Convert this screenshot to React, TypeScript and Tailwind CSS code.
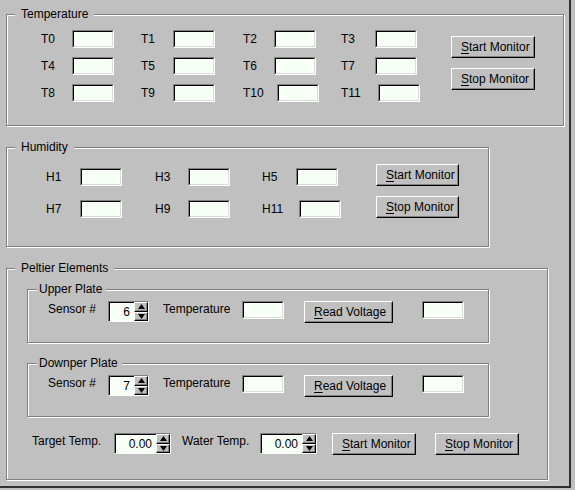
import React from 'react';

// Motif-style sunken text field
const Field = () => (
  <div className="w-[42px] h-[18px] shrink-0 border border-t-[#808080] border-l-[#808080] border-b-white border-r-white">
    <div className="h-full border border-t-black border-l-black border-b-[#dcdcdc] border-r-[#dcdcdc] bg-[#f7fff7]" />
  </div>
);

const Button: React.FC<{ u: string; rest: string; w: string }> = ({ u, rest, w }) => (
  <button
    className={`${w} h-[22px] shrink-0 flex items-center pl-[9px] bg-[#c0c0c0] border border-t-white border-l-white border-b-black border-r-black shadow-[inset_-1px_-1px_0_#808080] text-[12px] leading-[14px] whitespace-pre`}
  >
    <span className="underline underline-offset-[2px]">{u}</span>
    {rest}
  </button>
);

const Arrow: React.FC<{ up?: boolean }> = ({ up }) => (
  <div className="flex-1 flex items-center justify-center border border-t-white border-l-white border-b-black border-r-black shadow-[inset_-1px_-1px_0_#808080]">
    <svg width="7" height="5" viewBox="0 0 7 5">
      {up ? <polygon points="3.5,0 7,5 0,5" fill="#000" /> : <polygon points="0,0 7,0 3.5,5" fill="#000" />}
    </svg>
  </div>
);

const Spin: React.FC<{ value: string; w: string }> = ({ value, w }) => (
  <div className={`${w} h-[21px] shrink-0 flex border border-t-[#808080] border-l-[#808080] border-b-white border-r-white`}>
    <div className="flex-1 flex items-center justify-end pr-[4px] bg-[#f7fff7] border-t border-l border-black">
      {value}
    </div>
    <div className="w-[14px] flex flex-col bg-[#c0c0c0]">
      <Arrow up />
      <Arrow />
    </div>
  </div>
);

const Labeled: React.FC<{ label: string; lw: string; w?: string }> = ({ label, lw, w = '' }) => (
  <div className={`flex items-center ${w}`}>
    <span className={`${lw} shrink-0`}>{label}</span>
    <Field />
  </div>
);

const Group: React.FC<{ title: string; box: string; sub?: boolean; children: React.ReactNode }> = ({ title, box, sub, children }) => (
  <div className={`relative shrink-0 border border-[#808080] shadow-[inset_1px_1px_0_#fff,1px_1px_0_#fff] ${box}`}>
    <span
      className={`absolute top-[-8px] bg-[#c0c0c0] leading-[14px] whitespace-nowrap ${sub ? 'left-[9px] pl-[2px] pr-[4px]' : 'left-[8px] px-[6px]'}`}
    >
      {title}
    </span>
    {children}
  </div>
);

const PlateRow: React.FC<{ value: string }> = ({ value }) => (
  <div className="flex items-start pt-[11px] pl-[20px]">
    <span className="w-[60px] mt-[1px] shrink-0">Sensor #</span>
    <Spin value={value} w="w-[41px]" />
    <span className="ml-[14px] w-[79px] mt-[1px] shrink-0">Temperature</span>
    <Field />
    <div className="ml-[20px]">
      <Button u="R" rest="ead Voltage" w="w-[89px]" />
    </div>
    <div className="ml-[29px]">
      <Field />
    </div>
  </div>
);

export default function App() {
  return (
    <div className="w-[575px] h-[490px] bg-[#c0c0c0] text-black text-[12px] leading-[14px] font-['Liberation_Sans',Arial,sans-serif]">
      <div className="w-[571px] h-[488px] border-r-2 border-b-2 border-[#303030] pl-[6px] pt-[14px] flex flex-col">
        <Group title="Temperature" box="w-[558px] h-[112px]">
          <div className="flex items-start pt-[15px] pl-[34px]">
            <div className="w-[410px] flex flex-col gap-[9px]">
              <div className="flex">
                <Labeled label="T0" lw="w-[31px]" w="w-[100px]" />
                <Labeled label="T1" lw="w-[32px]" w="w-[102px]" />
                <Labeled label="T2" lw="w-[31px]" w="w-[98px]" />
                <Labeled label="T3" lw="w-[34px]" />
              </div>
              <div className="flex">
                <Labeled label="T4" lw="w-[31px]" w="w-[100px]" />
                <Labeled label="T5" lw="w-[32px]" w="w-[102px]" />
                <Labeled label="T6" lw="w-[31px]" w="w-[98px]" />
                <Labeled label="T7" lw="w-[34px]" />
              </div>
              <div className="flex">
                <Labeled label="T8" lw="w-[31px]" w="w-[100px]" />
                <Labeled label="T9" lw="w-[32px]" w="w-[102px]" />
                <Labeled label="T10" lw="w-[34px]" w="w-[98px]" />
                <Labeled label="T11" lw="w-[37px]" />
              </div>
            </div>
            <div className="mt-[6px] flex flex-col gap-[10px]">
              <Button u="S" rest="tart Monitor" w="w-[84px]" />
              <Button u="S" rest="top Monitor" w="w-[84px]" />
            </div>
          </div>
        </Group>

        <div className="mt-[21px]">
          <Group title="Humidity" box="w-[483px] h-[100px]">
            <div className="flex items-start pt-[16px] pl-[39px]">
              <div className="w-[330px] mt-[4px] flex flex-col gap-[14px]">
                <div className="flex">
                  <Labeled label="H1" lw="w-[34px]" w="w-[109px]" />
                  <Labeled label="H3" lw="w-[33px]" w="w-[107px]" />
                  <Labeled label="H5" lw="w-[34px]" />
                </div>
                <div className="flex">
                  <Labeled label="H7" lw="w-[34px]" w="w-[109px]" />
                  <Labeled label="H9" lw="w-[33px]" w="w-[107px]" />
                  <Labeled label="H11" lw="w-[37px]" />
                </div>
              </div>
              <div className="flex flex-col gap-[10px]">
                <Button u="S" rest="tart Monitor" w="w-[83px]" />
                <Button u="S" rest="top Monitor" w="w-[83px]" />
              </div>
            </div>
          </Group>
        </div>

        <div className="mt-[21px]">
          <Group title="Peltier Elements" box="w-[542px] h-[212px]">
            <div className="flex flex-col pl-[20px] pt-[20px]">
              <Group title="Upper Plate" box="w-[462px] h-[54px]" sub>
                <PlateRow value="6" />
              </Group>
              <div className="mt-[20px]">
                <Group title="Downper Plate" box="w-[462px] h-[54px]" sub>
                  <PlateRow value="7" />
                </Group>
              </div>
            </div>
            <div className="flex items-start mt-[16px] pl-[25px]">
              <span className="w-[82px] mt-[1px] shrink-0">Target Temp.</span>
              <Spin value="0.00" w="w-[57px]" />
              <span className="ml-[11px] w-[78px] mt-[1px] shrink-0">Water Temp.</span>
              <Spin value="0.00" w="w-[57px]" />
              <div className="ml-[15px]">
                <Button u="S" rest="tart Monitor" w="w-[84px]" />
              </div>
              <div className="ml-[19px]">
                <Button u="S" rest="top Monitor" w="w-[84px]" />
              </div>
            </div>
          </Group>
        </div>
      </div>
    </div>
  );
}
